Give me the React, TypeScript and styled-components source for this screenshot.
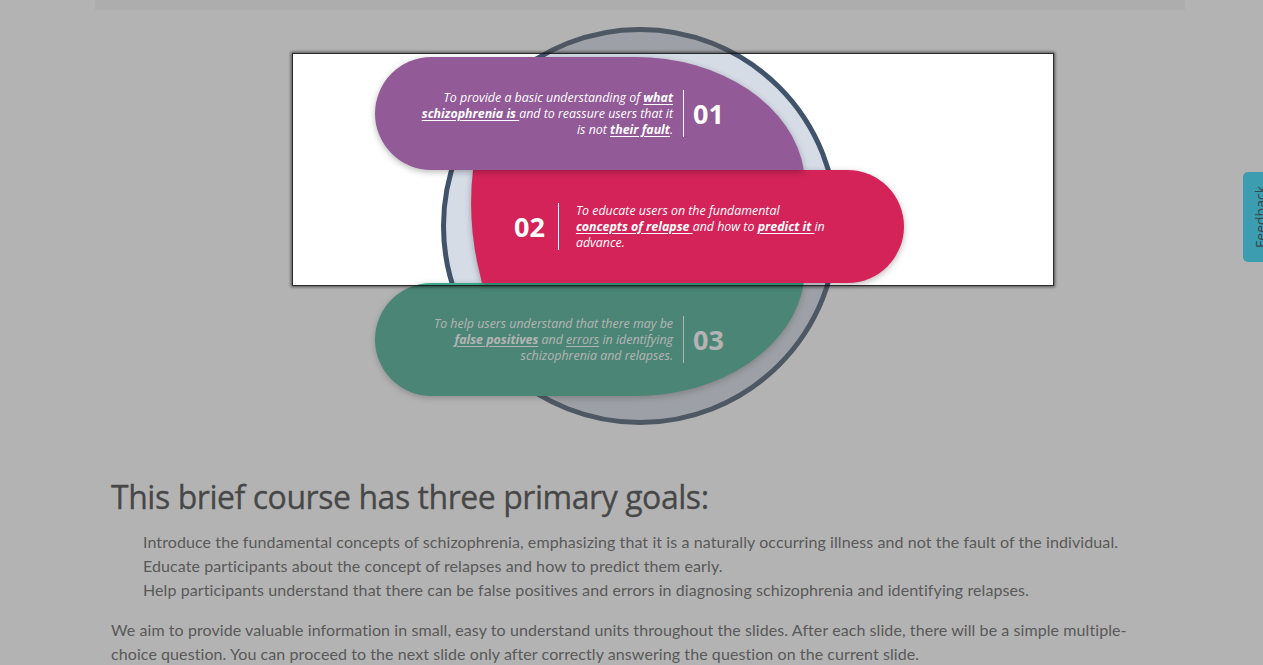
import * as React from 'react';
import styled, { createGlobalStyle, css } from 'styled-components';

const GlobalStyle = createGlobalStyle`
    html, body {
        margin: 0;
        padding: 0;
        background: #ffffff;
        overflow: hidden;
    }
    body {
        font-family: "Lato", "Liberation Sans", sans-serif;
        color: #555555;
    }
`;

type Tone = 'purple' | 'pink' | 'green';

const toneColor: Record<Tone, string> = {
    purple: '#925a97',
    pink: '#d42359',
    green: '#3aa98a'
};

const Page = styled.div`
    position: relative;
    min-height: 665px;
`;

const Container = styled.div`
    width: 1090px;
    margin-left: 95px;
`;

const TopBar = styled.div`
    height: 10px;
    background: #f3f3f3;
`;

const Figure = styled.div`
    position: relative;
    height: 440px;
`;

const Ring = styled.div`
    position: absolute;
    left: 346px;
    top: 17px;
    width: 398px;
    height: 398px;
    box-sizing: border-box;
    border: 5px solid #41536a;
    border-radius: 50%;
    background: #d5dce6;
`;

const PillBox = styled.div<{ $left: number; $top: number; $width: number; $layer: number }>`
    position: absolute;
    left: ${p => p.$left}px;
    top: ${p => p.$top}px;
    width: ${p => p.$width}px;
    height: 113px;
    z-index: ${p => p.$layer};
`;

const PillShape = styled.svg`
    position: absolute;
    inset: 0;
    width: 100%;
    height: 100%;
    overflow: visible;
    filter: drop-shadow(0 2px 3px rgba(0, 0, 0, 0.28));
`;

const PillContent = styled.div<{ $reverse?: boolean }>`
    position: relative;
    display: flex;
    align-items: center;
    height: 100%;
    box-sizing: border-box;
    padding-left: ${p => (p.$reverse ? 42 : 43)}px;
    color: #ffffff;
`;

const PillText = styled.p<{ $align: 'left' | 'right' }>`
    margin: 0;
    width: ${p => (p.$align === 'right' ? 255 : 262)}px;
    font-family: "Open Sans", "Liberation Sans", sans-serif;
    font-style: italic;
    font-size: 12.4px;
    line-height: 16px;
    text-align: ${p => p.$align};
    white-space: nowrap;

    u {
        text-decoration-thickness: 1px;
        text-underline-offset: 2px;
    }
    b {
        font-weight: 700;
    }
`;

const Divider = styled.span<{ $reverse?: boolean }>`
    flex: none;
    width: 1px;
    height: 47px;
    background: #ffffff;
    ${p =>
        p.$reverse
            ? css`
                  margin: 0 17px 0 13px;
              `
            : css`
                  margin: 0 9px 0 10px;
              `}
`;

const Number = styled.span`
    font-family: "Open Sans", "Liberation Sans", sans-serif;
    font-weight: 700;
    font-size: 27px;
    line-height: 1;
`;

const shapes: Record<Tone, { d: string; w: number }> = {
    purple: { d: 'M56.5 0 H260 A170 128 0 0 1 428.8 113 H56.5 A56.5 56.5 0 0 1 56.5 0 Z', w: 430 },
    pink: { d: 'M1 0 H375.5 A56.5 56.5 0 0 1 375.5 113 H10 Q-5.5 55.5 1 0 Z', w: 432 },
    green: { d: 'M56.5 113 H260 A170 128 0 0 0 428.8 0 H56.5 A56.5 56.5 0 0 0 56.5 113 Z', w: 430 }
};

const Pill = ({
    tone,
    left,
    top,
    layer,
    num,
    children
}: {
    tone: Tone;
    left: number;
    top: number;
    layer: number;
    num: string;
    children: React.ReactNode;
}) => {
    const shape = shapes[tone];
    const reverse = tone === 'pink';
    return (
        <PillBox $left={left} $top={top} $width={shape.w} $layer={layer}>
            <PillShape viewBox={`0 0 ${shape.w} 113`} preserveAspectRatio="none">
                <path d={shape.d} fill={toneColor[tone]} />
            </PillShape>
            <PillContent $reverse={reverse}>
                {reverse ? (
                    <>
                        <Number>{num}</Number>
                        <Divider $reverse />
                        <PillText $align="left">{children}</PillText>
                    </>
                ) : (
                    <>
                        <PillText $align="right">{children}</PillText>
                        <Divider />
                        <Number>{num}</Number>
                    </>
                )}
            </PillContent>
        </PillBox>
    );
};

const Article = styled.section`
    padding: 0 16px;
`;

const Title = styled.h2`
    margin: 28px 0 14px;
    font-family: "Open Sans", "Liberation Sans", sans-serif;
    font-weight: 400;
    font-size: 32px;
    line-height: 38px;
    letter-spacing: -0.45px;
    color: #333333;
    -webkit-text-stroke: 0.3px #333333;
`;

const GoalList = styled.ul`
    list-style: none;
    margin: 0;
    padding-left: 32px;
`;

const Goal = styled.li`
    font-size: 16px;
    line-height: 24px;
    letter-spacing: 0.09px;
    color: #555555;
`;

const Body = styled.p`
    margin: 16px 0 0;
    font-size: 16px;
    line-height: 24px;
    letter-spacing: 0.08px;
    color: #555555;
`;

const Spotlight = styled.div`
    position: absolute;
    left: 292px;
    top: 53px;
    width: 762px;
    height: 233px;
    box-sizing: border-box;
    border: 1px solid rgba(20, 20, 20, 0.9);
    box-shadow: 0 0 3px 1px rgba(0, 0, 0, 0.55), 0 0 0 9999px rgba(94, 94, 94, 0.47);
    pointer-events: none;
    z-index: 10;
`;

const FeedbackTab = styled.button`
    position: fixed;
    top: 172px;
    right: -14px;
    width: 34px;
    height: 90px;
    padding: 0;
    border: none;
    border-radius: 5px 0 0 5px;
    background: #3c9db1;
    display: flex;
    align-items: center;
    justify-content: center;
    z-index: 20;

    span {
        writing-mode: vertical-rl;
        transform: rotate(180deg);
        font-family: "Open Sans", "Liberation Sans", sans-serif;
        font-size: 14px;
        color: #35474f;
    }
`;

export default function App() {
    return (
        <Page>
            <GlobalStyle />
            <Container>
                <TopBar />
                <Figure>
                    <Ring />
                    <Pill tone="green" left={280} top={273} layer={1} num="03">
                        To help users understand that there may be
                        <br />
                        <u>
                            <b>false positives</b>
                        </u>{' '}
                        and <u>errors</u> in identifying
                        <br />
                        schizophrenia and relapses.
                    </Pill>
                    <Pill tone="pink" left={377} top={160} layer={2} num="02">
                        To educate users on the fundamental
                        <br />
                        <u>
                            <b>concepts of relapse </b>
                        </u>
                        and how to{' '}
                        <u>
                            <b>predict it </b>
                        </u>
                        in
                        <br />
                        advance.
                    </Pill>
                    <Pill tone="purple" left={280} top={47} layer={3} num="01">
                        To provide a basic understanding of{' '}
                        <u>
                            <b>what</b>
                        </u>
                        <br />
                        <u>
                            <b>schizophrenia is </b>
                        </u>
                        and to reassure users that it
                        <br />
                        is not{' '}
                        <u>
                            <b>their fault</b>
                        </u>
                        .
                    </Pill>
                </Figure>
                <Article>
                    <Title>This brief course has three primary goals:</Title>
                    <GoalList>
                        <Goal>
                            Introduce the fundamental concepts of schizophrenia, emphasizing that it is a naturally
                            occurring illness and not the fault of the individual.
                        </Goal>
                        <Goal>Educate participants about the concept of relapses and how to predict them early.</Goal>
                        <Goal>
                            Help participants understand that there can be false positives and errors in diagnosing
                            schizophrenia and identifying relapses.
                        </Goal>
                    </GoalList>
                    <Body>
                        We aim to provide valuable information in small, easy to understand units throughout the
                        slides. After each slide, there will be a simple multiple-choice question. You can proceed to
                        the next slide only after correctly answering the question on the current slide.
                    </Body>
                </Article>
            </Container>
            <Spotlight />
            <FeedbackTab>
                <span>Feedback</span>
            </FeedbackTab>
        </Page>
    );
}
